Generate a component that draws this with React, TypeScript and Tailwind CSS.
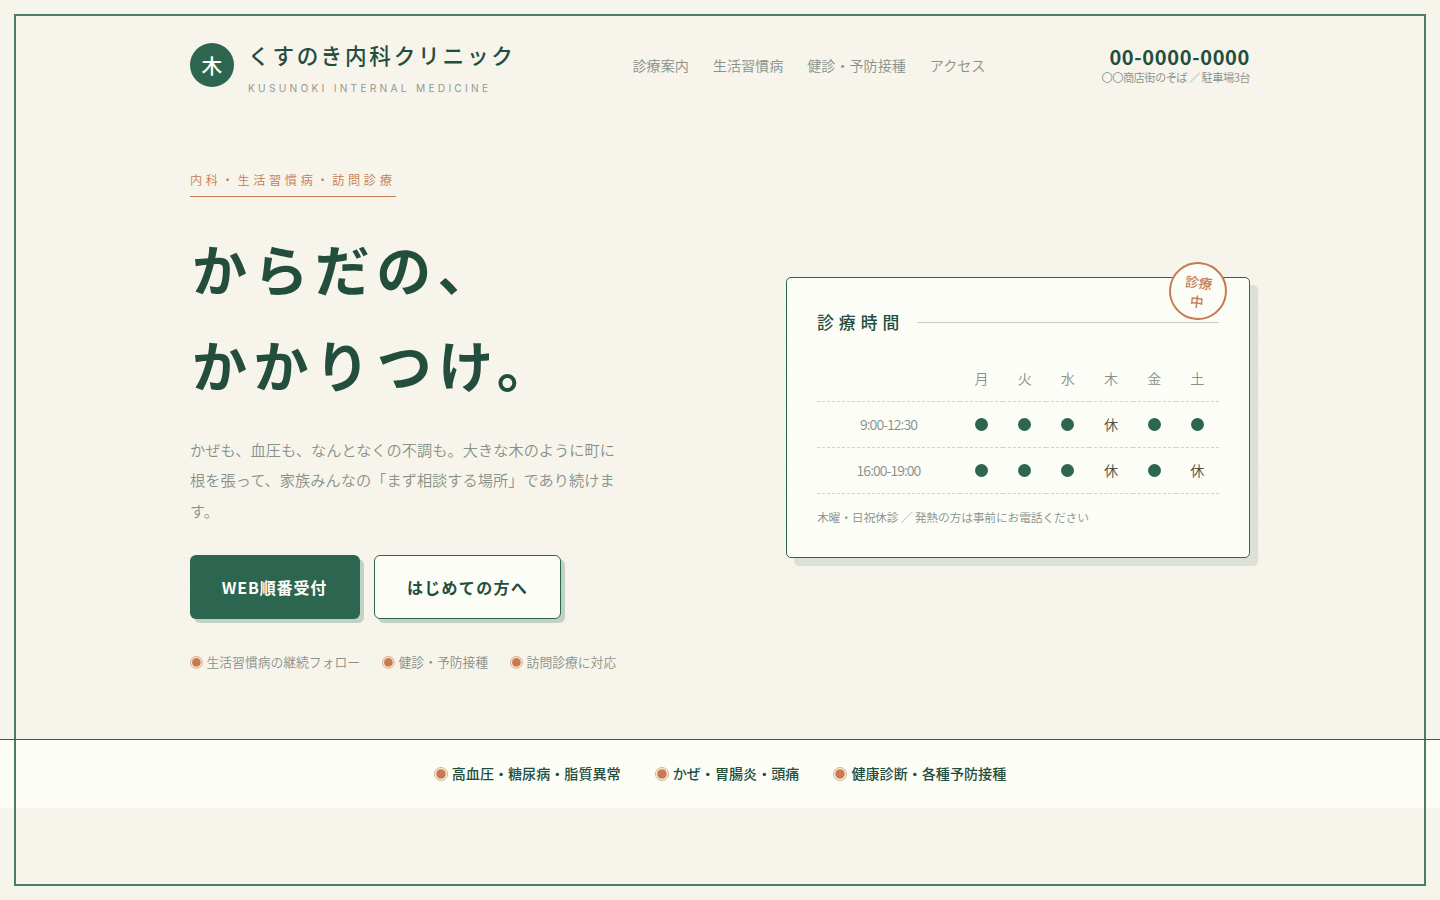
import React from "react";

const days = ["月", "火", "水", "木", "金", "土"];
const hours = [
  { time: "9:00-12:30", open: [true, true, true, false, true, true] },
  { time: "16:00-19:00", open: [true, true, true, false, true, false] },
];

function Mark({ large = false }: { large?: boolean }) {
  return (
    <svg
      viewBox="0 0 14 14"
      className={large ? "mt-px mr-1 size-[14px] shrink-0" : "mr-[3.7px] size-[12.8px] shrink-0"}
      fill="none"
    >
      <circle cx="7" cy="7" r="6.4" stroke="#c67c4e" strokeWidth="0.7" />
      <circle cx="7" cy="7" r="4.8" fill="#c67c4e" />
    </svg>
  );
}

function Header() {
  return (
    <header className="mx-auto flex h-[132px] w-[1060px] items-start whitespace-nowrap">
      <div className="flex w-[442px] items-start pt-[43px]">
        <div className="flex size-11 items-center justify-center rounded-full bg-[#2d6650] text-[20.8px] leading-none font-medium text-[#fdfdf7]">
          木
        </div>
        <div className="-mt-1 ml-[14px]">
          <div className="h-8 text-[21.6px] leading-8 font-medium tracking-[2.8px] text-[#234e3d]">くすのき内科クリニック</div>
          <div className="mt-[9px] h-4 font-[Inter] text-[10.2px] leading-4 tracking-[3.25px] text-[#929a91]">
            KUSUNOKI INTERNAL MEDICINE
          </div>
        </div>
      </div>
      <nav className="flex gap-6 pt-[54px] pl-[0.5px] text-[14.08px] leading-[22px] font-[350] text-[#87918a]">
        <a>診療案内</a>
        <a>生活習慣病</a>
        <a>健診・予防接種</a>
        <a>アクセス</a>
      </nav>
      <div className="ml-auto flex flex-col items-end pt-[45px]">
        <div className="text-[20px] leading-6 font-bold tracking-[0.65px] text-[#234e3d]">00-0000-0000</div>
        <div className="-mt-px text-[11.3px] leading-[18px] font-[350] tracking-[-0.6px] text-[#87918a]">〇〇商店街のそば ／ 駐車場3台</div>
      </div>
    </header>
  );
}

function Intro() {
  return (
    <div className="w-[430px] whitespace-nowrap">
      <div className="mt-[37px] flex h-7 w-[206px] items-start border-b border-[#c67c4e] text-[12.16px] leading-[22px] font-[350] tracking-[3.65px] text-[#c67c4e]">
        内科・生活習慣病・訪問診療
      </div>
      <h1 className="mt-[22px] pl-[2px] text-[55px] leading-[96px] font-bold tracking-[6.4px] text-[#234e3d]">
        からだの、
        <br />
        かかりつけ。
      </h1>
      <p className="mt-[23px] text-[15.2px] leading-[30.4px] font-[350] tracking-[0.04px] text-[#87918a]">
        かぜも、血圧も、なんとなくの不調も。大きな木のように町に
        <br />
        根を張って、家族みんなの「まず相談する場所」であり続けま
        <br />
        す。
      </p>
      <div className="mt-[30px] flex gap-[14px] text-[16px] font-bold tracking-[1.28px]">
        <button className="h-16 w-[170px] rounded-md bg-[#2d6650] pr-px tracking-[0.85px] text-[#fdfdf7] shadow-[4px_4px_0_#c3d1c5]">
          WEB順番受付
        </button>
        <button className="h-16 w-[187px] rounded-md border border-[#2d6650] bg-[#fdfdf7] text-[#234e3d] shadow-[4px_4px_0_#c3d1c5]">
          はじめての方へ
        </button>
      </div>
      <div className="mt-[33px] flex gap-[22px] text-[12.8px] leading-5 font-[350] text-[#87918a]">
        {["生活習慣病の継続フォロー", "健診・予防接種", "訪問診療に対応"].map((label) => (
          <span key={label} className="flex items-center">
            <Mark />
            {label}
          </span>
        ))}
      </div>
    </div>
  );
}

function Dot() {
  return <span className="mx-auto block size-[13px] rounded-full bg-[#2d6650]" />;
}

function Schedule() {
  return (
    <section className="relative mt-[145px] h-[281px] w-[464px] rounded-[5px] border border-[#2d6650] bg-[#fdfdf7] px-[30px] shadow-[8px_8px_0_#dce0d6]">
      <div className="absolute -top-4 right-[22px] flex size-[58px] rotate-6 flex-col items-center justify-center gap-[5px] rounded-full border-2 border-[#c67c4e] bg-[#fdfdf7] text-[13.6px] leading-[14px] font-medium text-[#c67c4e]">
        <span>診療</span>
        <span>中</span>
      </div>
      <div className="mt-[30px] flex h-7 items-center gap-[12.5px]">
        <h2 className="text-[16.8px] leading-7 font-medium tracking-[5.04px] text-[#234e3d]">診療時間</h2>
        <div className="h-px flex-1 bg-[#c3d1c5]" />
      </div>
      <table className="mt-[19px] w-full table-fixed border-collapse text-center text-[14.08px] leading-none font-[350]">
        <colgroup>
          <col className="w-[143px]" />
          {days.map((d) => (
            <col key={d} />
          ))}
        </colgroup>
        <tbody>
          <tr className="h-[46px] text-[#87918a]">
            <td className="border-b border-dashed border-[#d0d5cc]" />
            {days.map((d) => (
              <td key={d} className="border-b border-dashed border-[#d0d5cc] p-0">
                {d}
              </td>
            ))}
          </tr>
          {hours.map((row) => (
            <tr key={row.time} className="h-[46px] text-[#454f48]">
              <td className="border-b border-dashed border-[#d0d5cc] p-0 font-[350] tracking-[-0.95px] text-[#87918a]">
                {row.time}
              </td>
              {row.open.map((open, i) => (
                <td key={days[i]} className="border-b border-dashed border-[#d0d5cc] p-0">
                  {open ? <Dot /> : "休"}
                </td>
              ))}
            </tr>
          ))}
        </tbody>
      </table>
      <p className="mt-[13px] text-[11.84px] leading-5 font-[350] tracking-[-0.22px] whitespace-nowrap text-[#87918a]">
        木曜・日祝休診 ／ 発熱の方は事前にお電話ください
      </p>
    </section>
  );
}

export default function App() {
  return (
    <div className="h-[900px] overflow-hidden bg-[#f7f4ec] bg-[repeating-linear-gradient(180deg,transparent_0px,transparent_30px,#f3f1e8_30px,#f3f1e8_31px)] font-['Noto_Sans_CJK_JP',sans-serif]">
      <Header />
      <main className="mx-auto flex h-[607px] w-[1060px] justify-between">
        <Intro />
        <Schedule />
      </main>
      <div className="flex h-[69px] items-center justify-center gap-[34px] border-t border-[#2d6650] bg-[#fdfdf7] text-[14.08px] font-medium whitespace-nowrap text-[#234e3d]">
        {["高血圧・糖尿病・脂質異常", "かぜ・胃腸炎・頭痛", "健康診断・各種予防接種"].map((label) => (
          <span key={label} className="flex items-center">
            <Mark large />
            {label}
          </span>
        ))}
      </div>
      <div className="pointer-events-none fixed inset-[14px] border-2 border-[#2d6650] opacity-85" />
    </div>
  );
}
